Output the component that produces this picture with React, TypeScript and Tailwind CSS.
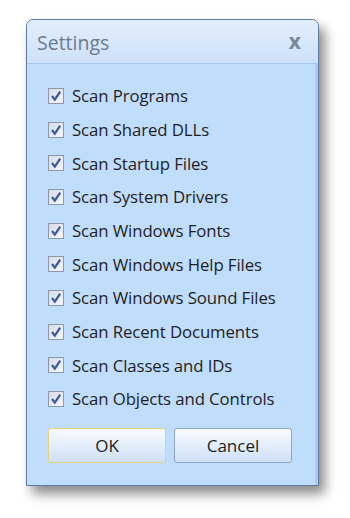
import React from 'react';

const items = [
  'Scan Programs',
  'Scan Shared DLLs',
  'Scan Startup Files',
  'Scan System Drivers',
  'Scan Windows Fonts',
  'Scan Windows Help Files',
  'Scan Windows Sound Files',
  'Scan Recent Documents',
  'Scan Classes and IDs',
  'Scan Objects and Controls',
];

const Check = () => (
  <span className="w-[16px] h-[16px] shrink-0 border border-[#8d99aa] bg-gradient-to-br from-[#d6dce5] to-[#f6f7f9] flex items-center justify-center">
    <svg width="12" height="12" viewBox="0 0 12 12">
      <path d="M2 6 L4.8 9.6 L10.2 1.6" fill="none" stroke="#3a5a98" strokeWidth="2.2" />
    </svg>
  </span>
);

export default function App() {
  return (
    <div className="w-[350px] h-[518px] bg-white pt-[19px] pl-[26px]" style={{ fontFamily: '"Open Sans", "Liberation Sans", sans-serif' }}>
      <div className="w-[293px] h-[467px] rounded-t-[7px] border border-[#5e7ca3] shadow-[6px_8px_12px_rgba(0,0,0,0.45)] bg-[#c1ddfc] flex flex-col overflow-hidden">
        <div className="h-[44px] shrink-0 flex items-center justify-between pl-[10px] pr-[17px] bg-gradient-to-b from-[#e3eefc] to-[#cde1f9] border-b border-[#a9c6ec]">
          <span className="text-[19.5px] text-[#6c7a8d] mt-[2px]">Settings</span>
          <span className="text-[21px] font-bold text-[#7a8898] leading-none">x</span>
        </div>
        <div className="flex flex-col pl-[21px] pt-[15px] border-r-[3px] border-r-[#aecbee] flex-1">
          {items.map((t) => (
            <div key={t} className="flex items-center gap-[8px] h-[33.7px]">
              <Check />
              <span className="text-[16.8px] text-[#1e1e1e] tracking-[-0.1px]">{t}</span>
            </div>
          ))}
          <div className="flex gap-[8px] mt-[12px]">
            <button className="w-[118px] h-[35px] rounded-[3px] border border-[#e8d27a] bg-gradient-to-b from-[#f8fbff] via-[#e3eefb] to-[#cfe0f6] text-[17px] text-[#1e1e1e]">OK</button>
            <button className="w-[118px] h-[35px] rounded-[3px] border border-[#8ea6c6] bg-gradient-to-b from-[#f8fbff] via-[#e3eefb] to-[#cfe0f6] text-[17px] text-[#1e1e1e]">Cancel</button>
          </div>
        </div>
      </div>
    </div>
  );
}
